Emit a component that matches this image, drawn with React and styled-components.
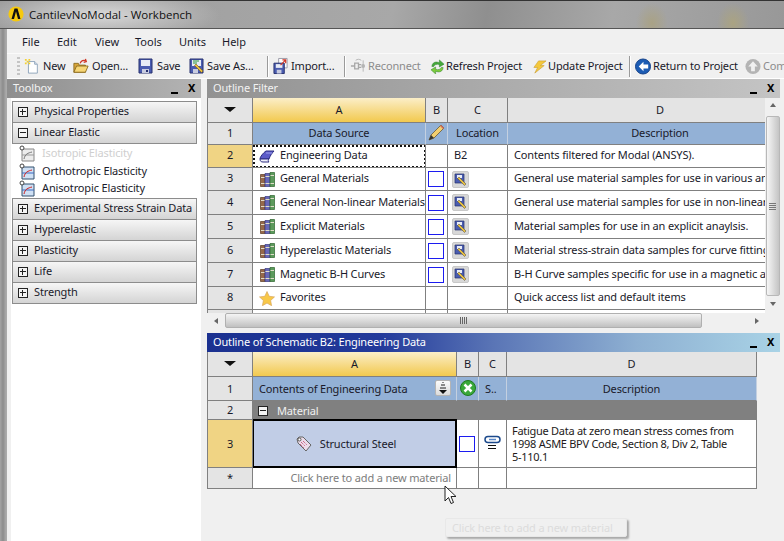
import React from "react";
import styled, { createGlobalStyle } from "styled-components";

const Global = createGlobalStyle`
  html, body { margin: 0; padding: 0; background: #f0f0f0; }
  * { box-sizing: border-box; }
`;

const Page = styled.div`
  position: relative;
  width: 784px;
  height: 541px;
  overflow: hidden;
  display: flex;
  flex-direction: column;
  font-family: "Noto Sans", "DejaVu Sans", sans-serif;
  font-size: 11px;
  letter-spacing: -.15px;
  color: #1a1a2a;
  background: #9a9a9a;
`;
const TitleBar = styled.header`
  height: 29px;
  flex: none;
  display: flex;
  align-items: center;
  gap: 5px;
  padding: 0 0 1px 8px;
  border-top: 1px solid #333;
  border-bottom: 1px solid #555;
  background:
    radial-gradient(ellipse 16px 20px at 652px 22px, #a9a285 0, #a9a28500 100%),
    radial-gradient(ellipse 16px 20px at 733px 22px, #aaa382 0, #aaa38200 100%),
    radial-gradient(ellipse 120px 26px at 100px 14px, #d8d8d8 0, #d8d8d800 100%),
    linear-gradient(100deg, #9c9c9c 0, #a8a8a8 50%, #8f8f8f 62%, #a8a8a8 78%, #989898 100%);
`;
const WindowTitle = styled.span`
  font-family: "Open Sans", "Noto Sans", sans-serif;
  font-size: 11.5px;
  color: #111;
  letter-spacing: 0;
`;
const Frame = styled.div`
  flex: 1;
  min-height: 0;
  display: flex;
  padding-left: 7px;
  background: linear-gradient(90deg, #a4a4a4 0, #8c8c8c 3px, #aaa 6px);
`;
const Main = styled.main`
  flex: 1;
  min-width: 0;
  display: flex;
  flex-direction: column;
  background: #f0f0f0;
`;
const MenuBar = styled.nav`
  height: 24px;
  flex: none;
  display: flex;
  align-items: center;
`;
const MenuItem = styled.span`
  width: ${p => p.$w}px;
  flex: none;
  letter-spacing: 0;
  &:first-child { margin-left: 15px; }
`;
const ToolBar = styled.div`
  height: 26px;
  flex: none;
  display: flex;
  align-items: center;
  padding-left: 10px;
  overflow: hidden;
  border-top: 1px solid #fafafa;
  border-bottom: 1px solid #fff;
  white-space: nowrap;
`;
const Grip = styled.span`
  width: 3px;
  height: 19px;
  margin-right: 4px;
  flex: none;
  background: repeating-linear-gradient(#c4c4c4 0 2px, transparent 2px 4px);
`;
const ToolButton = styled.span`
  flex: none;
  width: ${p => p.$w}px;
  display: flex;
  align-items: center;
  gap: ${p => p.$gap ?? 2}px;
  color: ${p => (p.$off ? "#8c8c8c" : "#1a1a2a")};
`;
const IconSlot = styled.span`
  width: 16px;
  height: 18px;
  flex: none;
  display: flex;
  align-items: center;
`;
const ToolSep = styled.span`
  width: 1px;
  height: 21px;
  margin: 0 5px 0 0;
  flex: none;
  background: #9a9a9a;
  box-shadow: 1px 0 #fff;
`;
const Workspace = styled.div`
  flex: 1;
  min-height: 0;
  display: flex;
`;
const LeftPanel = styled.aside`
  width: 194px;
  flex: none;
  display: flex;
  flex-direction: column;
`;
const PaneTitle = styled.div`
  height: 19px;
  flex: none;
  display: flex;
  align-items: center;
  padding: 0 1px 2px 6px;
  color: ${p => (p.$active ? "#fff" : "#f2f2f2")};
  background: ${p =>
    p.$active
      ? "linear-gradient(90deg, #1b3190 0, #22399a 30%, #5a75b6 50%, #8eb0d2 75%, #a9d3e6 100%)"
      : p.$wide
      ? "linear-gradient(90deg, #929292 0, #a6a6a6 40%, #c4c4c4 100%)"
      : "linear-gradient(90deg, #8e8e8e 0, #b4b4b4 100%)"};
`;
const PaneName = styled.span`
  flex: 1;
`;
const PaneClose = styled.span`
  color: #000;
  font-weight: bold;
  font-size: 11px;
  line-height: 1;
  width: 17px;
  text-align: center;
`;
const PaneMin = styled.span`
  width: 17px;
  height: 13px;
  flex: none;
  display: flex;
  justify-content: center;
  align-items: flex-end;
  &::after {
    content: "";
    width: 7px;
    height: 2px;
    background: #000;
  }
`;
const ToolBody = styled.div`
  flex: 1;
  padding: 3px 4px 0 1px;
  border-left: 4px solid #f0f0f0;
  background: #fff;
  display: flex;
  flex-direction: column;
`;
const Group = styled.div`
  flex: none;
  display: flex;
  align-items: center;
  gap: 6px;
  padding: 0 0 3px 5px;
  margin-top: ${p => (p.$first ? 0 : -1)}px;
  height: 22px;
  border: 1px solid #8c8c8c;
  background: linear-gradient(#f6f6f6, #d4d4d4);
  white-space: nowrap;
`;
const Expander = styled.span`
  width: 10px;
  height: 10px;
  flex: none;
  position: relative;
  margin-top: 2px;
  border: 1px solid #222;
  background: #f4f4f4;
  &::before {
    content: "";
    position: absolute;
    left: 1px; right: 1px; top: 3px; height: 2px;
    border-top: 1px solid #222;
  }
  &::after {
    content: "";
    display: ${p => (p.$open ? "none" : "block")};
    position: absolute;
    top: 1px; bottom: 1px; left: 3px; width: 2px;
    border-left: 1px solid #222;
  }
`;
const ToolItems = styled.div`
  height: 55px;
  flex: none;
  display: flex;
  flex-direction: column;
  padding-top: 1px;
`;
const ToolItem = styled.div`
  height: 17.5px;
  flex: none;
  display: flex;
  align-items: center;
  gap: 7px;
  padding-left: 7px;
  color: ${p => (p.$off ? "#cfcfcf" : "#1a1a2a")};
`;
const Splitter = styled.div`
  width: 6px;
  flex: none;
  background: #f0f0f0;
`;
const RightCol = styled.section`
  flex: 1;
  min-width: 0;
  display: flex;
  flex-direction: column;
  padding-right: 4px;
`;
const TableRow = styled.div`
  display: flex;
  flex: none;
  height: ${p => p.$h}px;
  overflow: hidden;
`;
const Sheet = styled.div`
  display: grid;
  flex: none;
  align-content: start;
  grid-template-columns: ${p => p.$cols};
  grid-template-rows: ${p => p.$rows};
  width: ${p => p.$w}px;
  height: ${p => p.$h}px;
  overflow: hidden;
  --num-lift: ${p => p.$numLift}px;
  --label-lift: ${p => p.$labelLift}px;
  border-left: 1px solid #808080;
  background: #fff;
`;
const Cell = styled.div`
  position: relative;
  display: flex;
  align-items: center;
  min-width: 0;
  overflow: hidden;
  white-space: nowrap;
  justify-content: ${p => p.$justify || "flex-start"};
  padding: ${p => p.$pad || "0"};
  border-right: 1px solid #808080;
  border-bottom: 1px solid #808080;
  background: #fff;
`;
const HeadCell = styled(Cell)`
  justify-content: center;
  padding-bottom: ${p => (p.$top ? "1px" : "var(--num-lift)")};
  background: ${p => (p.$gold ? "linear-gradient(#fbeec8, #f2c94e)" : p.$sel ? "#f0d484" : "#e4e4e4")};
`;
const BlueCell = styled(Cell)`
  justify-content: ${p => p.$justify || "center"};
  padding-left: ${p => p.$indent || 0}px;
  padding-bottom: var(--num-lift);
  background: #93b1d6;
  border-right-color: #c4d0e0;
`;
const BandCell = styled(Cell)`
  background: #808080;
  color: #f0f0f0;
  gap: 9px;
  padding-left: 5px;
  border-right: none;
  grid-column: 2 / -1;
`;
const Label = styled.span`
  margin-bottom: var(--label-lift, 2px);
`;
const DataIcon = styled.span`
  width: 22px;
  height: 18px;
  flex: none;
  margin-right: 2px;
  display: flex;
  align-items: center;
  justify-content: center;
`;
const FocusFrame = styled.span`
  position: absolute;
  inset: 0 -1px -1px 0;
  border: 2px dotted #111;
  pointer-events: none;
`;
const SteelCell = styled(Cell)`
  justify-content: center;
  gap: 8px;
  padding-right: 17px;
  margin: -1px 0 0 0;
  background: #c1cde6;
  border: 2px solid #000;
  border-left-width: 1px;
`;
const Check = styled.span`
  width: 16px;
  height: 16px;
  flex: none;
  margin-right: 1px;
  border: 1px solid #1c1cf0;
  background: #fff;
`;
const EditButton = styled.span`
  width: 17px;
  height: 17px;
  flex: none;
  display: flex;
  align-items: center;
  justify-content: center;
  background: #d8d8d8;
  border-radius: 2px;
  border: 1px solid #c8c8c8;
`;
const SortButton = styled.span`
  position: absolute;
  right: 5px;
  top: 3px;
  width: 16px;
  height: 16px;
  background: linear-gradient(#fbfbfb, #dcdcdc);
  border: 1px solid #b4b4b4;
  border-radius: 2px;
  display: flex;
  align-items: center;
  justify-content: center;
`;
const Hint = styled.span`
  color: #7d7d7d;
  margin-bottom: 1px;
`;
const WrapText = styled.span`
  line-height: 13px;
  letter-spacing: -.28px;
  color: #231a1a;
`;
const VScroll = styled.div`
  width: 15px;
  flex: none;
  display: flex;
  flex-direction: column;
  align-items: center;
  background: #f0f0f0;
`;
const VThumb = styled.div`
  width: 14px;
  height: 180px;
  margin-top: 9px;
  margin-bottom: 6px;
  display: flex;
  align-items: center;
  justify-content: center;
  border: 1px solid #b8b8b8;
  border-radius: 2px;
  background: linear-gradient(90deg, #f6f6f6, #d8d8d8 60%, #c4c4c4);
`;
const ArrowUp = styled.span`
  width: 0; height: 0;
  margin-top: 5px;
  border: 3px solid transparent;
  border-top: none;
  border-bottom: 4px solid #666;
`;
const ArrowDown = styled.span`
  width: 0; height: 0;
  border: 3px solid transparent;
  border-bottom: none;
  border-top: 4px solid #666;
`;
const SortCaret = styled.span`
  width: 0; height: 0;
  border: 6px solid transparent;
  border-bottom: none;
  border-top: 5px solid #111;
`;
const VGrip = styled.span`
  width: 7px;
  height: 7px;
  background: repeating-linear-gradient(#777 0 1px, transparent 1px 2px);
`;
const HScroll = styled.div`
  height: 18px;
  flex: none;
  display: flex;
  align-items: center;
  padding: 0 0 3px 7px;
  margin-bottom: 2px;
  background: #f0f0f0;
`;
const ArrowLeft = styled.span`
  width: 0; height: 0;
  margin-right: 7px;
  border: 3px solid transparent;
  border-left: none;
  border-right: 4px solid #666;
`;
const ArrowRight = styled.span`
  width: 0; height: 0;
  margin-left: 53px;
  border: 3px solid transparent;
  border-right: none;
  border-left: 4px solid #666;
`;
const HThumb = styled.div`
  width: 477px;
  height: 15px;
  display: flex;
  align-items: center;
  justify-content: center;
  border: 1px solid #b0b0b0;
  border-radius: 2px;
  background: linear-gradient(#f4f4f4, #d8d8d8 55%, #c0c0c0);
`;
const HGrip = styled.span`
  width: 7px;
  height: 7px;
  background: repeating-linear-gradient(90deg, #666 0 1px, transparent 1px 2px);
`;
const Tooltip = styled.div`
  position: absolute;
  left: 445px;
  top: 518px;
  width: 182px;
  height: 19px;
  padding: 0 6px;
  display: flex;
  align-items: center;
  color: #dcdcdc;
  background: #f0f0f0;
  border: 1px solid #e8e8e8;
  border-radius: 2px;
  box-shadow: 2px 2px 2px #a8a8a8;
  white-space: nowrap;
`;
const Cursor = styled.svg`
  position: absolute;
  left: 444px;
  top: 485px;
`;

const AnsysIcon = () => (
  <svg width="16" height="16" viewBox="0 0 16 16">
    <circle cx="8" cy="8" r="7.6" fill="#f6c90e" />
    <path d="M3.500 13 6.500 2.500h3L12.500 13H10L8 5.500 6 13z" fill="#111" />
  </svg>
);
const NewIcon = () => (
  <svg width="18" height="18" viewBox="0 0 18 18">
    <path d="M5 4h7l3 3v10H5z" fill="#fff" stroke="#8aa0b8" />
    <path d="M12 4v3h3" fill="#dde6f0" stroke="#8aa0b8" />
    <path d="M1 1h2v2H1zM5 1h2v2H5zM3 3h2v2H3zM1 5h2v2H1zM5 5h2v2H5z" fill="#f4d030" />
  </svg>
);
const OpenIcon = () => (
  <svg width="18" height="18" viewBox="0 0 18 18">
    <path d="M1 6h5l1 2h7v8H1z" fill="#d9a63a" stroke="#8a6a20" />
    <path d="M1 16 4 9h13l-3 7z" fill="#f7d676" stroke="#8a6a20" />
    <path d="M8 6c1-3 4-4 6-3M14 1l1 3-3 1" fill="none" stroke="#d03828" strokeWidth="1.4" />
  </svg>
);
const FloppyIcon = () => (
  <svg width="15" height="16" viewBox="0 0 15 16">
    <path d="M1 1h13v14H1z" fill="#4a5cb0" stroke="#26306e" />
    <path d="M3 2h9v6H3z" fill="#e8ecf6" />
    <path d="M4 11h7v4H4z" fill="#c8cce0" />
    <path d="M8 12h2v2H8z" fill="#26306e" />
  </svg>
);
const SaveAsIcon = () => (
  <svg width="16" height="16" viewBox="0 0 16 16">
    <path d="M1 1h13v14H1z" fill="#4a5cb0" stroke="#26306e" />
    <path d="M3 2h9v6H3z" fill="#e8ecf6" />
    <path d="M4 3h6M4 5h4" stroke="#2a9a3a" />
    <path d="M4 11h5v4H4z" fill="#c8cce0" />
    <path d="m7 6 7 7-1.500 1.500-7-7z" fill="#e8c040" stroke="#7a5a18" strokeWidth=".6" />
  </svg>
);
const ImportIcon = () => (
  <svg width="17" height="18" viewBox="0 0 17 18">
    <path d="M6 1h9v10H6z" fill="#fff" stroke="#9a9aa8" />
    <path d="M1 6h11v11H1z" fill="#4a5cb0" stroke="#26306e" />
    <path d="M3 7h7v4H3z" fill="#e8ecf6" />
    <path d="M4 13h5v4H4z" fill="#c8cce0" />
    <path d="m8 8 5-5M10 2.500h3.500V6" fill="none" stroke="#d03828" strokeWidth="1.3" />
  </svg>
);
const PlugIcon = () => (
  <svg width="17" height="16" viewBox="0 0 17 16">
    <path d="M1 8h4M5 5h4v6H5zM9 6.500h3M9 9.500h3" stroke="#a8a8a8" strokeWidth="1.400" fill="none" />
    <circle cx="14" cy="8" r="2" fill="#b4b4b4" />
    <path d="M14 2v12M6 2c2-1.500 4-1.500 6 0" stroke="#b4b4b4" fill="none" />
  </svg>
);
const RefreshIcon = () => (
  <svg width="15" height="15" viewBox="0 0 16 16">
    <path d="M2 8c0-4 4-6 8-4V1l5 4.500-5 3V6c-3-1-5 0-6 2z" fill="#44a83a" stroke="#2a7a2a" strokeWidth=".5" />
    <path d="M14 9c0 4-4 6-8 4v3l-5-4.500 5-3V11c3 1 5 0 6-2z" fill="#7ccc3c" stroke="#2a7a2a" strokeWidth=".5" />
  </svg>
);
const BoltIcon = () => (
  <svg width="15" height="15" viewBox="0 0 16 16">
    <path d="M7 2h8L9 7h4L3 15l3-6H2z" fill="#f4c83c" stroke="#c89a28" strokeWidth=".6" />
  </svg>
);
const BackIcon = () => (
  <svg width="17" height="17" viewBox="0 0 17 17">
    <circle cx="8.500" cy="8.500" r="8" fill="#1c5cb4" stroke="#123f86" />
    <path d="M9 3.500 4 8.500l5 5v-3h5v-4H9z" fill="#fff" />
  </svg>
);
const UpIcon = () => (
  <svg width="17" height="17" viewBox="0 0 17 17">
    <circle cx="8.500" cy="8.500" r="8" fill="#b4b4b4" />
    <path d="M8.500 3 3.500 8.500h3v5h4v-5h3z" fill="#f0f0f0" />
  </svg>
);
const ChartIcon = ({ off }) => (
  <svg width="16" height="17" viewBox="0 0 16 17">
    <path d="M3 4h12v12H3z" fill={off ? "#ececec" : "#cfe0f4"} stroke={off ? "#888" : "#33506e"} />
    <path d="M3 10h12" stroke={off ? "#999" : "#3a6ac0"} />
    <path d="M5 14c1-5 4-6 8-7" fill="none" stroke={off ? "#777" : "#d02020"} />
    <circle cx="3" cy="3" r="2" fill="#fff" stroke="#444" />
  </svg>
);
const BookIcon = () => (
  <svg width="16" height="13" viewBox="0 0 16 13">
    <path d="M1 9c0-2 3-6 6-8h8c-2 2-4 5-5 8z" fill="#5a5ac8" stroke="#2c2c80" strokeLinejoin="round" />
    <path d="M1 9c0 2 1 3 3 3h6c-1-1-1-2 0-3z" fill="#f0f0fa" stroke="#2c2c80" strokeLinejoin="round" />
    <path d="M7 3h6" stroke="#a0a0ee" />
  </svg>
);
const BooksIcon = () => (
  <svg width="15" height="15" viewBox="0 0 15 15">
    <path d="M.5 2.500h4.500v12H.5z" fill="#96694a" stroke="#5a3a20" strokeWidth=".7" />
    <path d="M5 1.500h5v13H5z" fill="#6868b8" stroke="#38387e" strokeWidth=".7" />
    <path d="M10 .5h4.500v14H10z" fill="#5c9a5c" stroke="#2c642c" strokeWidth=".7" />
    <path d="M1 5.500h3.500M1 11.500h3.500M5.500 4.500h4M5.500 11.500h4M10.500 3.500h3.500M10.500 11.500h3.500" stroke="#e0dcc8" />
  </svg>
);
const StarIcon = () => (
  <svg width="16" height="15" viewBox="0 0 16 15">
    <path d="m8 .5 2.200 4.800 5.300.6-3.900 3.600 1 5.200L8 12.100l-4.600 2.600 1-5.200L.5 5.900l5.300-.6z" fill="#f8c848" stroke="#d8a860" strokeWidth=".7" />
  </svg>
);
const PencilIcon = () => (
  <svg width="17" height="18" viewBox="0 0 17 18">
    <path d="m1 17 2-5L13 2l3 3L6 15z" fill="#f2cf70" stroke="#5a4a28" strokeWidth=".7" />
    <path d="m1 17 2-5 3 3z" fill="#333" />
    <path d="m12 3 3 3 1-1-3-3z" fill="#d06a60" />
  </svg>
);
const EditGlyph = () => (
  <svg width="13" height="13" viewBox="0 0 13 13">
    <path d="M1 1h9v9H1z" fill="#4a5cb0" stroke="#26306e" strokeWidth=".7" />
    <path d="M3 2h5v3H3z" fill="#e8ecf6" />
    <path d="m5 4 7 7-1.500 1.500-7-7z" fill="#e8c040" stroke="#444" strokeWidth=".5" />
  </svg>
);
const SortGlyph = () => (
  <svg width="10" height="12" viewBox="0 0 10 12">
    <path d="M4 0h2M3 3h4M2 6h6" stroke="#222" />
    <path d="M5 12 1 8h8z" fill="#111" />
  </svg>
);
const ErrorIcon = () => (
  <svg width="16" height="16" viewBox="0 0 16 16">
    <circle cx="8" cy="8" r="7.500" fill="#3aa83a" stroke="#1e7a1e" />
    <path d="m4.500 4.500 7 7m0-7-7 7" stroke="#fff" strokeWidth="2.500" />
  </svg>
);
const TagIcon = () => (
  <svg width="16" height="16" viewBox="0 0 16 16">
    <path d="M1 3 3 1h4l8 8-5 6-8-8z" fill="#ecdcea" stroke="#666" />
    <path d="m5 6 4 4M7 5l4 4M4 8l4 4" stroke="#c0305a" strokeDasharray="1 1" />
    <circle cx="3.500" cy="3.500" r="1.500" fill="#fff" stroke="#555" />
  </svg>
);
const LinkIcon = () => (
  <svg width="17" height="17" viewBox="0 0 17 17">
    <rect x="1" y="1.500" width="15" height="6" rx="3" fill="none" stroke="#1c4a8c" strokeWidth="1.500" />
    <path d="M5 4.500h7" stroke="#5a88c8" strokeWidth="1.500" />
    <path d="M4 10.500h8M4 13.500h8" stroke="#111" />
  </svg>
);

const groupsAfter = ["Experimental Stress Strain Data", "Hyperelastic", "Plasticity", "Life", "Strength"];
const filterRows = [
  { n: 3, name: "General Materials", desc: "General use material samples for use in various analyses." },
  { n: 4, name: "General Non-linear Materials", desc: "General use material samples for use in non-linear analyses." },
  { n: 5, name: "Explicit Materials", desc: "Material samples for use in an explicit anaylsis." },
  { n: 6, name: "Hyperelastic Materials", desc: "Material stress-strain data samples for curve fitting." },
  { n: 7, name: "Magnetic B-H Curves", desc: "B-H Curve samples specific for use in a magnetic analysis." },
];
const TOP_COLS = "45px 173px 22px 60px 305px";
const TOP_ROWS = "25px 22px 23px 23px 24px 24px 24px 24px 23px 24px";
const BOT_COLS = "45px 204px 22px 28px 250px";
const BOT_ROWS = "25px 24px 19px 48px 21px";

const PaneControls = () => (
  <>
    <PaneMin />
    <PaneClose>X</PaneClose>
  </>
);

export default function App() {
  return (
    <Page>
      <Global />
      <TitleBar>
        <AnsysIcon />
        <WindowTitle>CantilevNoModal - Workbench</WindowTitle>
      </TitleBar>
      <Frame>
        <Main>
          <MenuBar>
            <MenuItem $w={35}>File</MenuItem>
            <MenuItem $w={38}>Edit</MenuItem>
            <MenuItem $w={40}>View</MenuItem>
            <MenuItem $w={44}>Tools</MenuItem>
            <MenuItem $w={43}>Units</MenuItem>
            <MenuItem $w={40}>Help</MenuItem>
          </MenuBar>
          <ToolBar>
            <Grip />
            <ToolButton $w={49} $gap={3}><IconSlot><NewIcon /></IconSlot><Label>New</Label></ToolButton>
            <ToolButton $w={65} $gap={3}><IconSlot><OpenIcon /></IconSlot><Label>Open...</Label></ToolButton>
            <ToolButton $w={51} $gap={3}><IconSlot><FloppyIcon /></IconSlot><Label>Save</Label></ToolButton>
            <ToolButton $w={78}><IconSlot><SaveAsIcon /></IconSlot><Label>Save As...</Label></ToolButton>
            <ToolSep />
            <ToolButton $w={71}><IconSlot><ImportIcon /></IconSlot><Label>Import...</Label></ToolButton>
            <ToolSep />
            <ToolButton $w={80} $off><IconSlot><PlugIcon /></IconSlot><Label>Reconnect</Label></ToolButton>
            <ToolButton $w={102} $gap={0}><IconSlot><RefreshIcon /></IconSlot><Label>Refresh Project</Label></ToolButton>
            <ToolButton $w={97} $gap={0}><IconSlot><BoltIcon /></IconSlot><Label>Update Project</Label></ToolButton>
            <ToolSep />
            <ToolButton $w={110}><IconSlot><BackIcon /></IconSlot><Label>Return to Project</Label></ToolButton>
            <ToolButton $w={80} $off><IconSlot><UpIcon /></IconSlot><Label>Compact Mode</Label></ToolButton>
          </ToolBar>
          <Workspace>
            <LeftPanel>
              <PaneTitle>
                <PaneName>Toolbox</PaneName>
                <PaneControls />
              </PaneTitle>
              <ToolBody>
                <Group $first><Expander />Physical Properties</Group>
                <Group><Expander $open />Linear Elastic</Group>
                <ToolItems>
                  <ToolItem $off><ChartIcon off /><Label>Isotropic Elasticity</Label></ToolItem>
                  <ToolItem><ChartIcon /><Label>Orthotropic Elasticity</Label></ToolItem>
                  <ToolItem><ChartIcon /><Label>Anisotropic Elasticity</Label></ToolItem>
                </ToolItems>
                {groupsAfter.map(g => (
                  <Group key={g}><Expander />{g}</Group>
                ))}
              </ToolBody>
            </LeftPanel>
            <Splitter />
            <RightCol>
              <PaneTitle $wide>
                <PaneName>Outline Filter</PaneName>
                <PaneControls />
              </PaneTitle>
              <TableRow $h={215}>
                <Sheet $cols={TOP_COLS} $rows={TOP_ROWS} $h={215} $w={558} $numLift={3} $labelLift={3}>
                  <HeadCell $top><SortCaret /></HeadCell>
                  <HeadCell $top $gold>A</HeadCell>
                  <HeadCell $top>B</HeadCell>
                  <HeadCell $top>C</HeadCell>
                  <HeadCell $top>D</HeadCell>

                  <HeadCell>1</HeadCell>
                  <BlueCell>Data Source</BlueCell>
                  <BlueCell><PencilIcon /></BlueCell>
                  <BlueCell>Location</BlueCell>
                  <BlueCell>Description</BlueCell>

                  <HeadCell $sel>2</HeadCell>
                  <Cell $pad="0 0 0 3px"><DataIcon><BookIcon /></DataIcon><Label>Engineering Data</Label><FocusFrame /></Cell>
                  <Cell />
                  <Cell $pad="0 0 0 6px"><Label>B2</Label></Cell>
                  <Cell $pad="0 0 0 6px"><Label>Contents filtered for Modal (ANSYS).</Label></Cell>

                  {filterRows.map(r => (
                    <React.Fragment key={r.n}>
                      <HeadCell>{r.n}</HeadCell>
                      <Cell $pad="0 0 0 3px"><DataIcon><BooksIcon /></DataIcon><Label>{r.name}</Label></Cell>
                      <Cell $justify="center"><Check /></Cell>
                      <Cell $pad="0 0 0 4px"><EditButton><EditGlyph /></EditButton></Cell>
                      <Cell $pad="0 0 0 6px"><Label>{r.desc}</Label></Cell>
                    </React.Fragment>
                  ))}

                  <HeadCell>8</HeadCell>
                  <Cell $pad="0 0 0 3px"><DataIcon><StarIcon /></DataIcon><Label>Favorites</Label></Cell>
                  <Cell />
                  <Cell />
                  <Cell $pad="0 0 0 6px"><Label>Quick access list and default items</Label></Cell>

                  <HeadCell />
                  <Cell />
                  <Cell />
                  <Cell />
                  <Cell />
                </Sheet>
                <VScroll>
                  <ArrowUp />
                  <VThumb><VGrip /></VThumb>
                  <ArrowDown />
                </VScroll>
              </TableRow>
              <HScroll>
                <ArrowLeft />
                <HThumb><HGrip /></HThumb>
                <ArrowRight />
              </HScroll>
              <PaneTitle $active>
                <PaneName>Outline of Schematic B2: Engineering Data</PaneName>
                <PaneControls />
              </PaneTitle>
              <Sheet $cols={BOT_COLS} $rows={BOT_ROWS} $h={137} $w={550} $numLift={1} $labelLift={1}>
                <HeadCell><SortCaret /></HeadCell>
                <HeadCell $gold>A</HeadCell>
                <HeadCell>B</HeadCell>
                <HeadCell>C</HeadCell>
                <HeadCell>D</HeadCell>

                <HeadCell>1</HeadCell>
                <BlueCell $justify="flex-start" $indent={6}>
                  Contents of Engineering Data
                  <SortButton><SortGlyph /></SortButton>
                </BlueCell>
                <BlueCell><ErrorIcon /></BlueCell>
                <BlueCell $justify="flex-start" $indent={6}>S..</BlueCell>
                <BlueCell>Description</BlueCell>

                <HeadCell>2</HeadCell>
                <BandCell><Expander $open />Material</BandCell>

                <HeadCell $sel>3</HeadCell>
                <SteelCell><TagIcon />Structural Steel</SteelCell>
                <Cell $justify="center"><Check /></Cell>
                <Cell $justify="center"><LinkIcon /></Cell>
                <Cell $pad="0 4px 0 5px">
                  <WrapText>
                    Fatigue Data at zero mean stress comes from<br />
                    1998 ASME BPV Code, Section 8, Div 2, Table<br />
                    5-110.1
                  </WrapText>
                </Cell>

                <HeadCell>*</HeadCell>
                <Cell $justify="flex-end" $pad="0 5px 0 0"><Hint>Click here to add a new material</Hint></Cell>
                <Cell />
                <Cell />
                <Cell />
              </Sheet>
            </RightCol>
          </Workspace>
        </Main>
      </Frame>
      <Tooltip>Click here to add a new material</Tooltip>
      <Cursor width="14" height="20" viewBox="0 0 14 20">
        <path d="M1 1v15l3.500-3.500L7 18.500l2.500-1-2.500-6h5z" fill="#fff" stroke="#222" />
      </Cursor>
    </Page>
  );
}
